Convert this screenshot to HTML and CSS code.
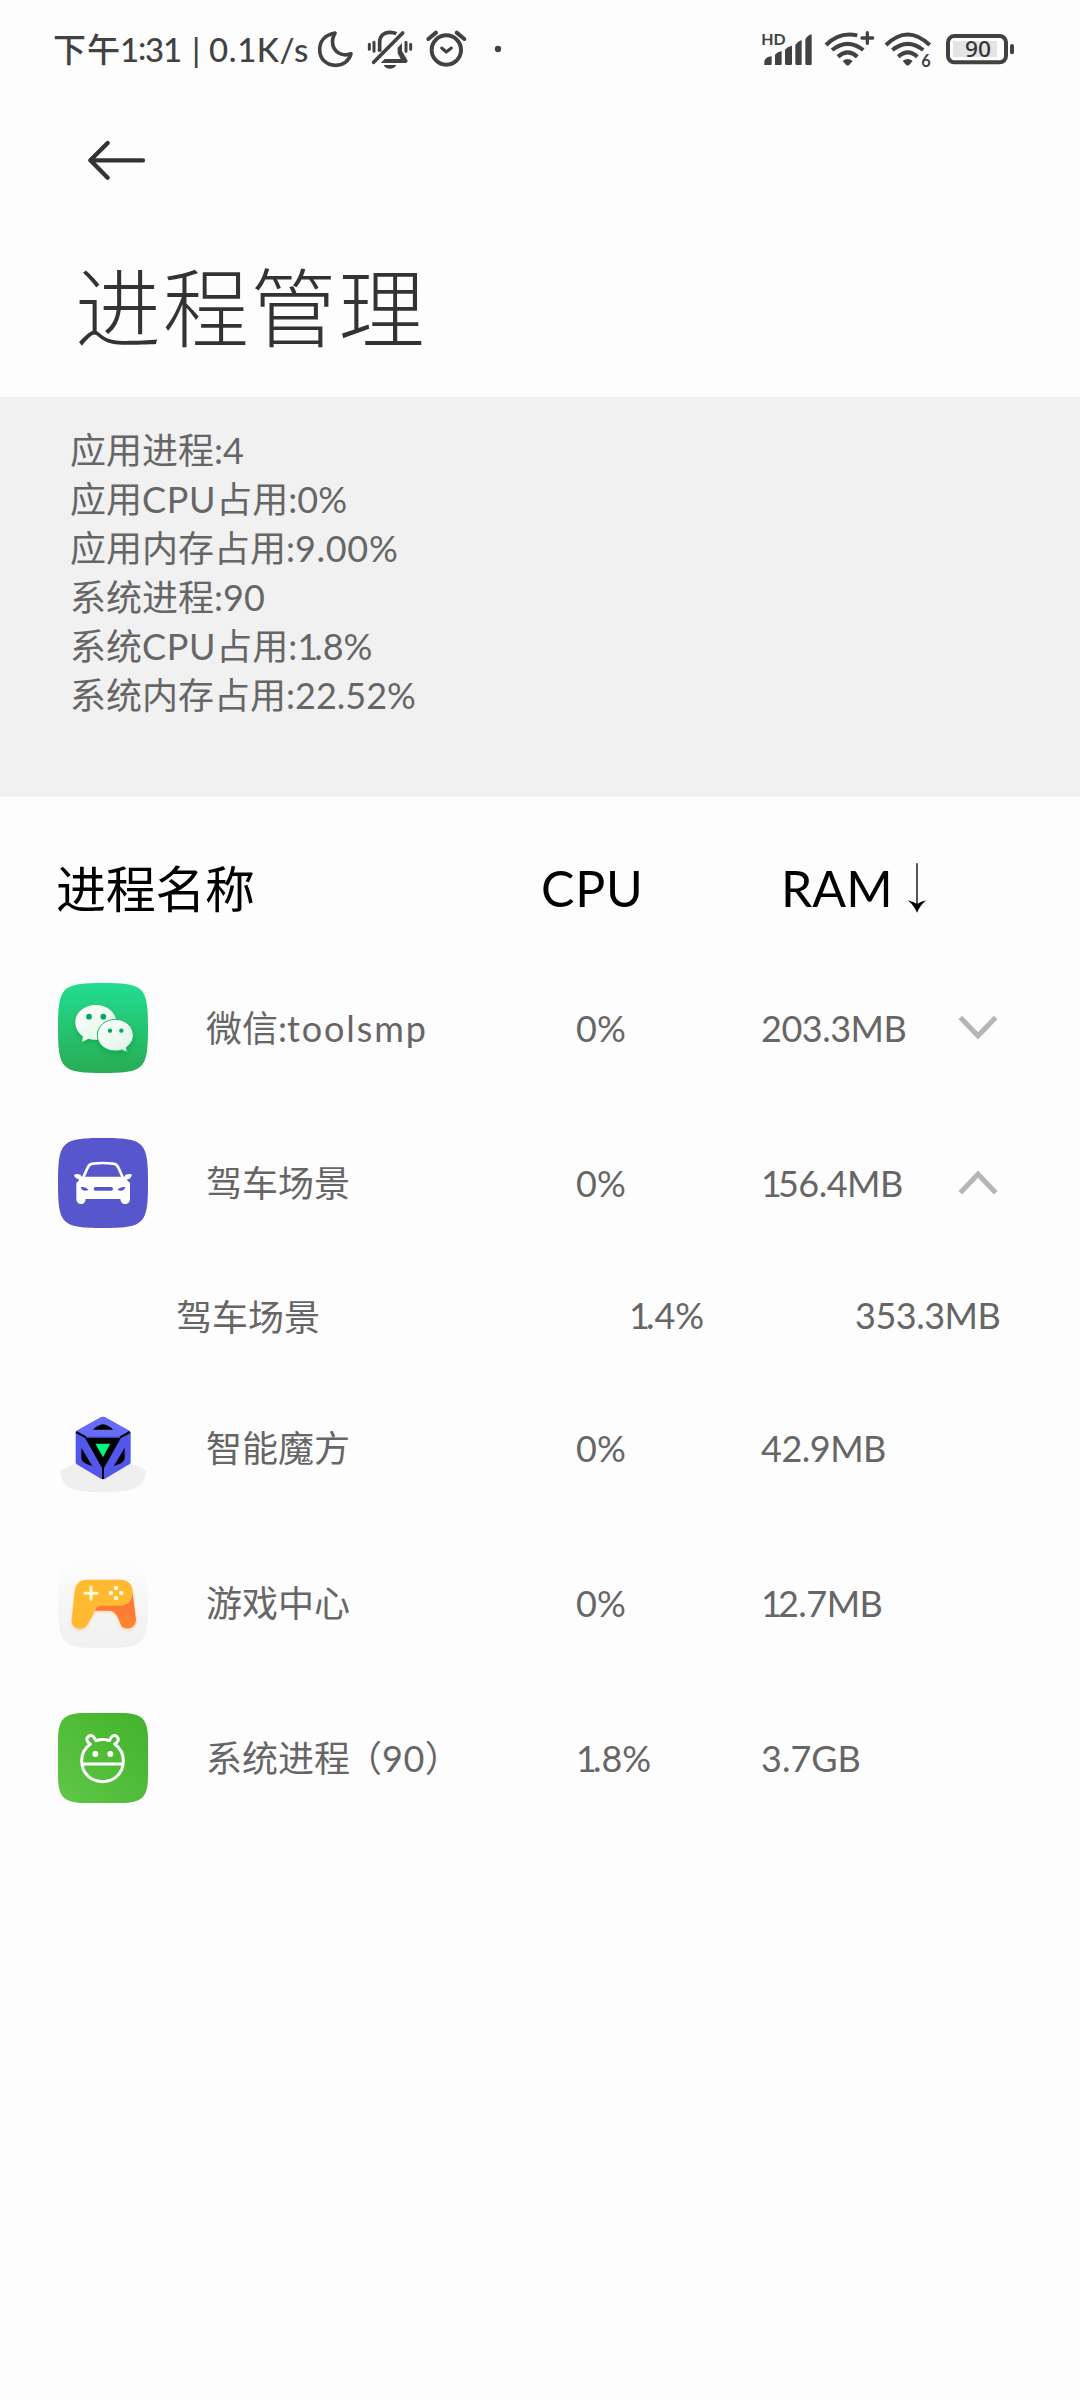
FILE: index.html
```html
<!DOCTYPE html>
<html lang="zh-CN">
<head>
<meta charset="utf-8">
<title>进程管理</title>
<link rel="stylesheet" href="styles.css">
</head>
<body>
<header class="status">
  <div class="status-text"><span class="ampm">下午</span><span class="clock">1<span class="colon">:</span>31</span><span class="sep">|</span><span class="speed">0.1K/s</span></div>
  <svg class="moon" viewBox="828 0 114 210" fill="none" stroke="#424242" stroke-width="11" stroke-linejoin="round"><path d="M885 54C853 60 839 80 839 104C839 132 860 151 887 151C910 151 928 137 933 116C921 121 908 121 896 114C876 102 872 76 885 54Z"/></svg>
  <svg class="bell" viewBox="978 0 144 210" fill="none" stroke="#424242" stroke-width="9" stroke-linecap="round"><path d="M988 88V103M1002 82V109M1098 82V109M1112 88V103"/><path d="M1019 110V82C1019 62 1032 52 1050 52C1057 52 1063 53 1069 56" stroke-width="11" stroke-linecap="butt"/><path d="M1001 142L1088 54" stroke-width="11"/><path d="M1073 98L1086 84V108L1102 135C1104 140 1102 144 1096 144H1022L1034 132H1082L1073 115Z" fill="#424242" stroke="none"/><path d="M1031 150H1069C1065 158 1059 161 1050 161C1041 161 1035 158 1031 150Z" fill="#424242" stroke="none"/></svg>
  <svg class="alarm" viewBox="1152 0 132 210" fill="none" stroke="#424242" stroke-width="12" stroke-linecap="round" stroke-linejoin="round"><circle cx="1219" cy="105" r="44"/><path d="M1165 72L1188 53M1250 53L1273 72"/><path d="M1205 99L1219 111L1234 99" stroke-width="9"/></svg>
  <svg class="dot" viewBox="1362 0 24 210" fill="#424242"><circle cx="1374" cy="102" r="9.5"/></svg>
  <svg class="signal" viewBox="60 0 162 210" fill="#424242"><text x="64" y="90" font-size="48" textLength="73" lengthAdjust="spacingAndGlyphs">HD</text><path d="M73 150V140C76 129 82 126 95 124V147Q95 150 92 150ZM105 150V119Q113 110 125 108V147Q125 150 122 150H108ZM135 147V104Q143 94 156 92V147Q156 150 153 150H138ZM166 147V89Q174 78 185 75V147Q185 150 182 150H169ZM196 147V73Q204 60 215 58V147Q215 150 212 150H199Z"/></svg>
  <svg class="wifi-plus" viewBox="252 0 153 210" fill="none" stroke="#424242" stroke-width="12"><path d="M258 90Q298 49 352 61M276 105Q323 68 370 105M294 125Q323 99 352 125"/><path d="M308 138Q323 126 338 138L328 149Q323 154 318 149Z" fill="#424242" stroke="none"/><path d="M382 53V85M366 69H398" stroke-width="10" stroke-linecap="round"/></svg>
  <svg class="wifi-six" viewBox="432 0 144 210" fill="none" stroke="#424242" stroke-width="12"><path d="M438 90Q503 27 569 90M457 105Q503 68 550 105M475 125Q503 99 532 125"/><path d="M488 138Q503 126 518 138L508 149Q503 154 498 149Z" fill="#424242" stroke="none"/><text x="544" y="156" font-size="49" fill="#424242" stroke="none">6</text></svg>
  <svg class="battery" viewBox="618 0 207 210"><rect x="639" y="78" width="132" height="48" fill="#e4e4e4"/><rect x="624" y="63" width="174" height="79" rx="19" fill="none" stroke="#424242" stroke-width="12"/><rect x="810" y="87" width="12" height="31" rx="6" fill="#424242"/><text class="charge" x="675" y="127" font-size="67" fill="#333" textLength="78" lengthAdjust="spacingAndGlyphs">90</text></svg>
</header>

<nav class="toolbar">
  <svg class="back" viewBox="108 54 183 132" fill="none" stroke="#333" stroke-width="13" stroke-linecap="round" stroke-linejoin="round"><path d="M279 121H121M173 69L121 121L173 173"/></svg>
</nav>
<h1 class="title">进程管理</h1>

<section class="summary">
  <p>应用进程:4</p>
  <p>应用<span class="wide">CPU</span>占用:0%</p>
  <p>应用内存占用:<span class="wide">9.00%</span></p>
  <p>系统进程:90</p>
  <p>系统<span class="wide">CPU</span>占用:<span class="one">1</span>.8%</p>
  <p>系统内存占用:22.52%</p>
</section>

<main class="list">
  <div class="head">
    <span class="col-name">进程名称</span>
    <span class="col-cpu">CPU</span>
    <span class="col-ram">RAM</span>
    <svg class="sort" viewBox="1161 66 60 156"><path d="M1191 70V200" stroke="#333" stroke-width="5"/><path d="M1163 181Q1182 186 1191 192Q1200 186 1219 181Q1201 195 1191 218Q1181 195 1163 181Z"/></svg>
  </div>

  <div class="row">
    <svg class="icon" viewBox="54 69 270 270"><defs><linearGradient id="green" x2="0" y2="1"><stop stop-color="#22dd91"/><stop offset="1" stop-color="#29ac53"/></linearGradient><linearGradient id="bubble" x2="1" y2="1"><stop stop-color="#fff"/><stop offset="1" stop-color="#dcf3e4"/></linearGradient><filter id="shade" x="-30%" y="-30%" width="160%" height="170%"><feDropShadow dx="0" dy="8" stdDeviation="8" flood-color="#00a03c" flood-opacity=".6"/></filter></defs><path fill="url(#green)" d="M54 204C54 80 65 69 189 69S324 80 324 204S313 339 189 339S54 328 54 204Z"/><g filter="url(#shade)"><path fill="url(#bubble)" d="M167 135C133 135 106 158 106 187C106 204 115 219 129 229L126 246L145 236Q159 240 173 239L229 180C223 153 198 135 167 135Z"/><path fill="url(#bubble)" stroke="#20b865" stroke-width="3" d="M226 178C196 178 172 199 172 226C172 253 196 273 226 273Q236 273 245 270L262 277L259 262C272 253 280 240 280 226C280 199 256 178 226 178Z"/></g><g fill="#05a85b"><circle cx="147" cy="170" r="8.5"/><circle cx="190" cy="170" r="8.5"/><circle cx="210" cy="212" r="6.5"/><circle cx="244" cy="212" r="6.5"/></g></svg>
    <span class="col-name">微信:<span class="wider">toolsmp</span></span><span class="col-cpu">0%</span><span class="col-ram">203.3MB</span>
    <svg class="chevron" viewBox="1254 160 120 80"><path d="M1261 170L1314 225L1367 170" fill="none" stroke="#b5b5b5" stroke-width="15"/></svg>
  </div>
  <div class="row">
    <svg class="icon" viewBox="54 534 270 270"><path fill="#5856cc" d="M54 669C54 545 65 534 189 534S324 545 324 669S313 804 189 804S54 793 54 669Z"/><path d="M129 654L142 625Q148 611 160 611Q189 607 218 611Q230 611 236 625L249 654" fill="none" stroke="#fff" stroke-width="8"/><path fill="#fff" d="M125 650H253L257 644Q273 640 276 645Q273 657 260 659L270 669V717Q269 732 255 732Q242 732 241 717H137Q136 732 123 732Q110 732 109 717V669L118 659Q103 655 102 645Q108 640 121 644Z"/><path fill="#5856cc" d="M122 681Q137 679 146 690Q126 697 122 681ZM256 681Q241 679 232 690Q252 697 256 681Z"/><rect x="161" y="681" width="58" height="11" rx="5" fill="#5856cc"/></svg>
    <span class="col-name">驾车场景</span><span class="col-cpu">0%</span><span class="col-ram"><span class="one">1</span>56.4MB</span>
    <svg class="chevron" viewBox="1254 625 120 80"><path d="M1261 696L1314 640L1367 696" fill="none" stroke="#b5b5b5" stroke-width="15"/></svg>
  </div>
  <div class="subrow">
    <span class="sub-name">驾车场景</span><span class="sub-cpu"><span class="one">1</span>.4%</span><span class="sub-ram">353.3MB</span>
  </div>
  <div class="row">
    <svg class="icon" viewBox="54 429 270 270"><path fill="#efefef" d="M106 610L60 631C65 680 85 697 189 697S313 680 318 631L273 610L189 570Z"/><path fill="#5356ea" d="M183 472Q189 468 195 472L268 512Q272 515 272 520V605Q272 610 268 613L195 656Q189 659 183 656L110 613Q107 610 107 605V520Q107 515 110 512Z"/><path fill="#666cf6" d="M183 472Q189 468 195 472L270 514L246 529H132L108 514Z"/><path d="M158 509Q164 501 180 495Q189 490 198 495Q214 501 220 509ZM135 533H243L192 624V657H186V624ZM124 563L157 619Q137 611 130 606Q124 602 124 594ZM254 563L221 619Q241 611 248 606Q254 602 254 594Z"/><path d="M108 516L138 532M270 516L240 532" stroke="#000" stroke-width="6"/><path fill="#00f579" d="M166 551H211L189 592Z"/></svg>
    <span class="col-name">智能魔方</span><span class="col-cpu">0%</span><span class="col-ram">42.9MB</span>
  </div>
  <div class="row">
    <svg class="icon" viewBox="54 55 270 270"><defs><linearGradient id="pale" x2="0" y2="1"><stop stop-color="#fdfdfd"/><stop offset="1" stop-color="#f0f0f0"/></linearGradient><linearGradient id="orange" x2="0" y2="1"><stop stop-color="#ff6f35"/><stop offset="1" stop-color="#ff8733"/></linearGradient><filter id="glow" x="-20%" y="-20%" width="140%" height="150%"><feDropShadow dx="0" dy="4" stdDeviation="5" flood-color="#ff9a50" flood-opacity=".4"/></filter></defs><path fill="url(#pale)" d="M54 191C54 67 65 56 189 56S324 67 324 191S313 326 189 326S54 315 54 191Z"/><g filter="url(#glow)"><path fill="url(#orange)" d="M278 160L288 238C290 260 267 274 249 263C235 252 236 213 207 213H165V190Z"/><path fill="#ffba31" d="M142 120H240C267 120 281 138 278 164C276 186 261 198 240 198H184C169 198 165 211 159 225L145 250C139 262 132 267 121 267C104 267 94 257 95 241L104 156C107 132 119 120 142 120Z"/></g><path d="M153 142V179M135 161H171" stroke="#fff8d0" stroke-width="9" stroke-linecap="round"/><g fill="#fff8d0"><circle cx="228" cy="145" r="7"/><circle cx="213" cy="160" r="7"/><circle cx="244" cy="160" r="7"/><circle cx="228" cy="175" r="7"/></g></svg>
    <span class="col-name">游戏中心</span><span class="col-cpu">0%</span><span class="col-ram"><span class="one">1</span>2.7MB</span>
  </div>
  <div class="row">
    <svg class="icon" viewBox="54 519 270 270"><defs><linearGradient id="leaf" x1="0" y1="1" x2="1" y2="0"><stop stop-color="#60c747"/><stop offset="1" stop-color="#42b22b"/></linearGradient></defs><path fill="url(#leaf)" d="M54 600C54 537 72 519 135 519H243C306 519 324 537 324 600V708C324 771 306 789 243 789H135C72 789 54 771 54 708Z"/><g fill="none" stroke="#fff" stroke-width="9" stroke-linejoin="round"><path d="M151 612C141 606 139 599 142 593C147 585 157 584 162 592L168 602Q188 595 208 602L214 592C219 584 229 585 233 593C237 599 234 606 224 612C242 625 250 642 250 662C250 699 223 725 188 725S125 699 125 662C125 642 133 625 151 612ZM126 672H250"/></g><circle cx="166" cy="642" r="9" fill="#fff"/><circle cx="211" cy="642" r="9" fill="#fff"/></svg>
    <span class="col-name">系统进程<span class="paren">（</span><span class="count">90</span>）</span><span class="col-cpu"><span class="one">1</span>.8%</span><span class="col-ram gb">3.7GB</span>
  </div>
</main>
</body>
</html>
```
FILE: styles.css
```css
* { box-sizing: border-box; }
body {
  margin: 0;
  width: 1080px;
  height: 2400px;
  background: #fdfdfd;
  color: #666;
  font-family: Lato, "Noto Sans CJK SC", sans-serif;
  font-size: 36px;
  font-variant-ligatures: none;
  overflow: hidden;
}
svg { display: block; flex: none; overflow: visible; }

/* Status bar */
.status { display: flex; height: 100px; padding: 15px 0 0 53px; color: #424242; }
.status svg { height: 70px; }
.status svg text { font-weight: 700; }
.status svg .charge { font-family: "Noto Sans", sans-serif; font-weight: 500; }
.status-text { display: flex; width: 263px; font-size: 33px; line-height: 69px; font-weight: 500; white-space: nowrap; }
.ampm { width: 67px; letter-spacing: 1px; }
.clock { width: 72px; letter-spacing: -1.2px; }
.colon { position: relative; top: -2px; }
.sep { width: 17px; }
.speed { letter-spacing: .6px; }
.moon { width: 38px; }
.bell { width: 48px; margin-left: 12px; }
.alarm { width: 44px; margin-left: 10px; }
.dot { width: 8px; margin-left: 26px; }
.signal { width: 54px; margin-left: 258px; }
.wifi-plus { width: 51px; margin-left: 10px; }
.wifi-six { width: 48px; margin-left: 9px; }
.battery { width: 69px; margin-left: 14px; }

.toolbar { height: 138px; padding: 38px 0 0 86px; }
.back { width: 61px; height: 44px; }
.title {
  margin: 0;
  height: 159px;
  padding-left: 75px;
  color: #333;
  font-size: 86px;
  font-weight: 300;
  line-height: 140px;
  letter-spacing: 1.8px;
}

/* Totals */
.summary { height: 400px; padding: 29px 0 0 70px; background: #f1f1f1; }
.summary p { margin: 0; height: 49px; line-height: 49px; }
.wide { letter-spacing: .7px; }
.wider { letter-spacing: 1.9px; }
.one { letter-spacing: -4px; }

/* Process table */
.head {
  display: grid;
  grid-template-columns: 485px 240px 131px auto;
  align-items: center;
  height: 153px;
  padding: 28px 0 0 56px;
  color: #000;
  font-size: 50px;
}
.head .col-name { margin-top: -4px; letter-spacing: -.3px; }
.head .col-cpu { letter-spacing: .8px; }
.sort { width: 20px; height: 52px; margin-left: -5px; }
.row {
  display: grid;
  grid-template-columns: 148px 370px 185px 197px 40px;
  align-items: center;
  height: 155px;
  padding-left: 58px;
  white-space: nowrap;
}
.row .col-name { margin-top: -3px; }
.row .col-ram, .sub-ram { letter-spacing: -.5px; }
.row .gb { letter-spacing: 0; }
.icon { width: 90px; height: 90px; }
.chevron { width: 40px; height: 27px; }
.subrow {
  display: grid;
  grid-template-columns: 453px 226px auto;
  align-items: center;
  height: 110px;
  padding-left: 176px;
}
.paren { margin-left: -4px; }
.count { letter-spacing: .5px; }
```
